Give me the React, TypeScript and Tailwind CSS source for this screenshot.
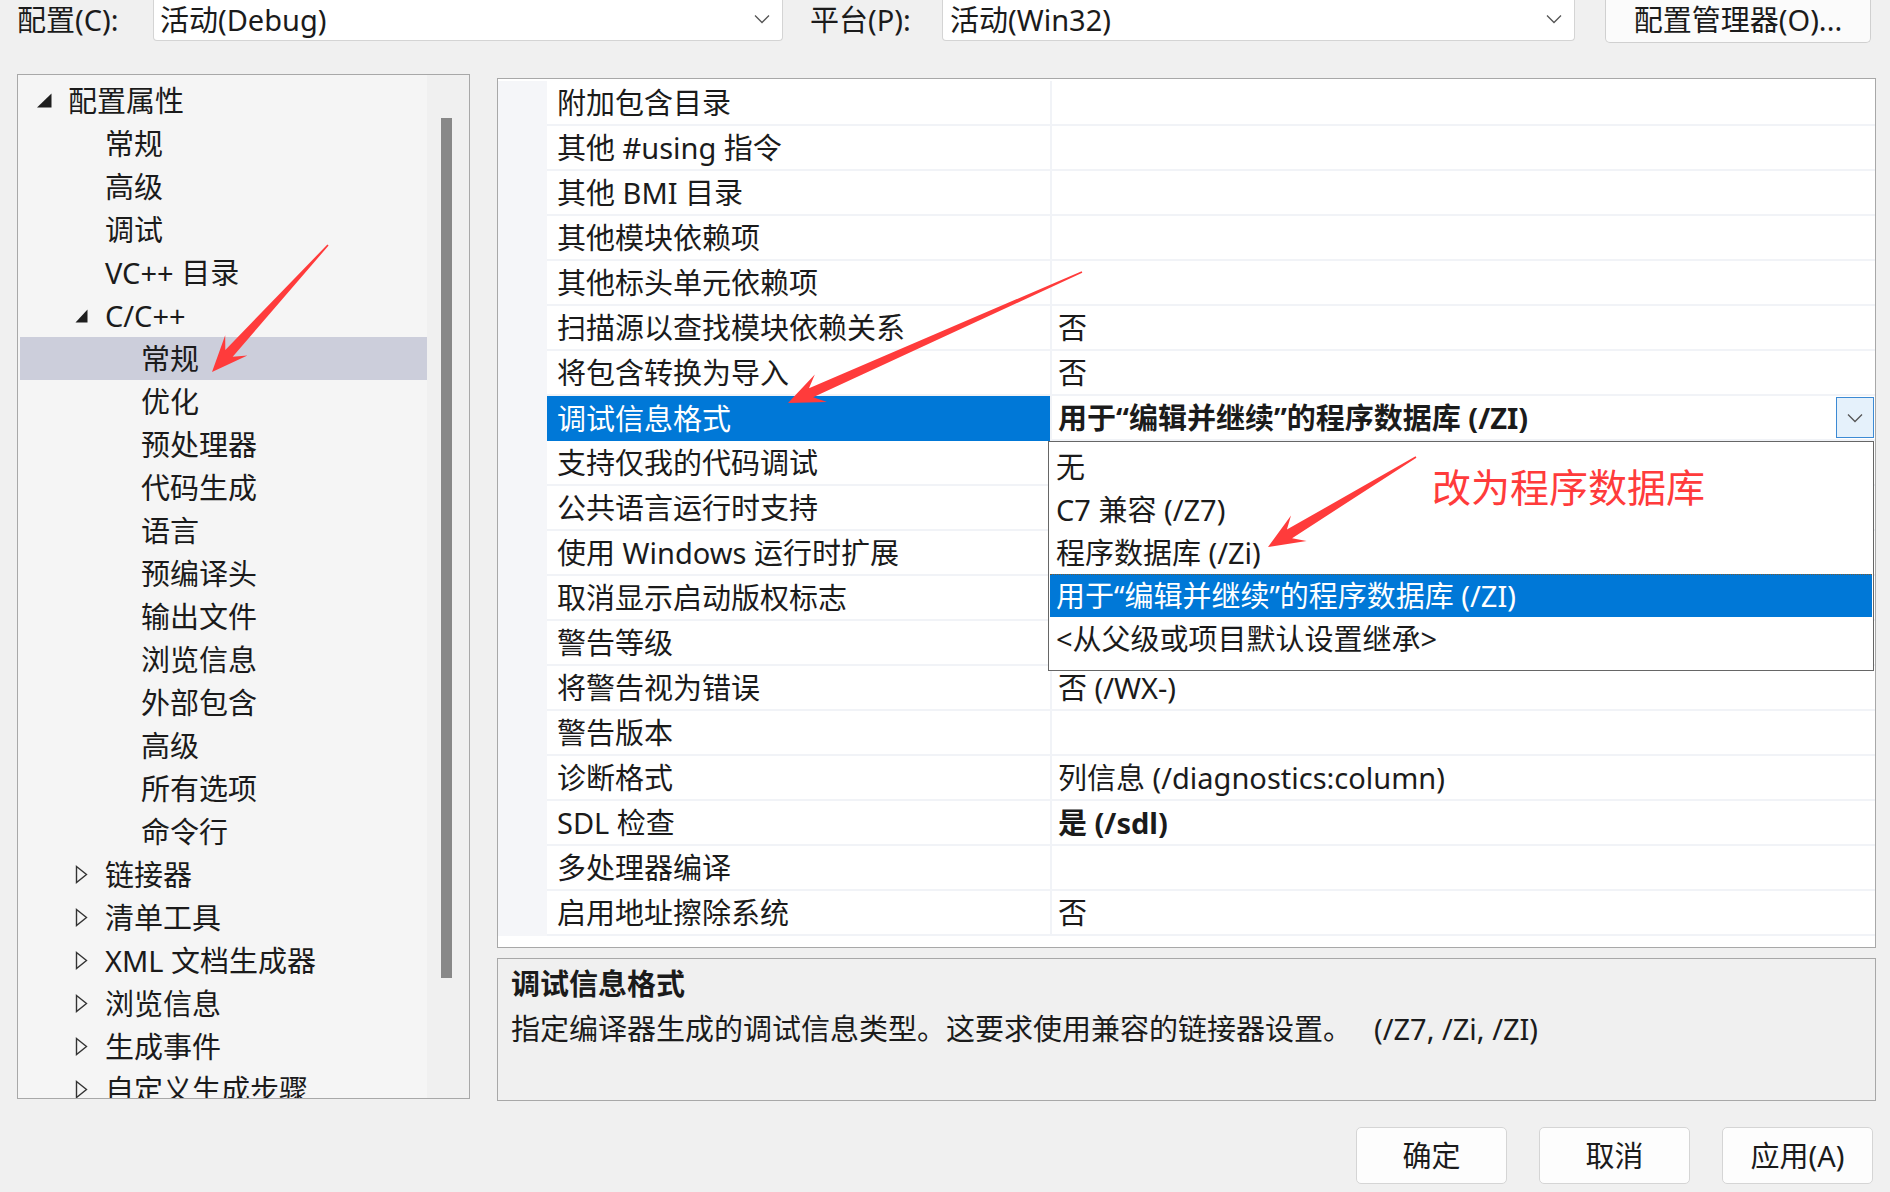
import React from "react";

type TreeItem = {
  label: string;
  level: number;
  toggle?: "open" | "closed";
  selected?: boolean;
};

const treeItems: TreeItem[] = [
  { label: "配置属性", level: 0, toggle: "open" },
  { label: "常规", level: 1 },
  { label: "高级", level: 1 },
  { label: "调试", level: 1 },
  { label: "VC++ 目录", level: 1 },
  { label: "C/C++", level: 1, toggle: "open" },
  { label: "常规", level: 2, selected: true },
  { label: "优化", level: 2 },
  { label: "预处理器", level: 2 },
  { label: "代码生成", level: 2 },
  { label: "语言", level: 2 },
  { label: "预编译头", level: 2 },
  { label: "输出文件", level: 2 },
  { label: "浏览信息", level: 2 },
  { label: "外部包含", level: 2 },
  { label: "高级", level: 2 },
  { label: "所有选项", level: 2 },
  { label: "命令行", level: 2 },
  { label: "链接器", level: 1, toggle: "closed" },
  { label: "清单工具", level: 1, toggle: "closed" },
  { label: "XML 文档生成器", level: 1, toggle: "closed" },
  { label: "浏览信息", level: 1, toggle: "closed" },
  { label: "生成事件", level: 1, toggle: "closed" },
  { label: "自定义生成步骤", level: 1, toggle: "closed" },
];

type PropRow = { name: string; value: string; selected?: boolean; bold?: boolean };

const propRows: PropRow[] = [
  { name: "附加包含目录", value: "" },
  { name: "其他 #using 指令", value: "" },
  { name: "其他 BMI 目录", value: "" },
  { name: "其他模块依赖项", value: "" },
  { name: "其他标头单元依赖项", value: "" },
  { name: "扫描源以查找模块依赖关系", value: "否" },
  { name: "将包含转换为导入", value: "否" },
  { name: "调试信息格式", value: "用于“编辑并继续”的程序数据库 (/ZI)", selected: true, bold: true },
  { name: "支持仅我的代码调试", value: "" },
  { name: "公共语言运行时支持", value: "" },
  { name: "使用 Windows 运行时扩展", value: "" },
  { name: "取消显示启动版权标志", value: "" },
  { name: "警告等级", value: "" },
  { name: "将警告视为错误", value: "否 (/WX-)" },
  { name: "警告版本", value: "" },
  { name: "诊断格式", value: "列信息 (/diagnostics:column)" },
  { name: "SDL 检查", value: "是 (/sdl)", bold: true },
  { name: "多处理器编译", value: "" },
  { name: "启用地址擦除系统", value: "否" },
];

const options = [
  "无",
  "C7 兼容 (/Z7)",
  "程序数据库 (/Zi)",
  "用于“编辑并继续”的程序数据库 (/ZI)",
  "<从父级或项目默认设置继承>",
];

// 箭头多边形：尾部细、头部带倒钩
const arrowPoints = (tx: number, ty: number, px: number, py: number) => {
  const dx = px - tx;
  const dy = py - ty;
  const len = Math.hypot(dx, dy);
  const ux = dx / len;
  const uy = dy / len;
  const nx = -uy;
  const ny = ux;
  const hl = 36;
  const hw = 15;
  const sw = 5;
  const bx = px - ux * hl;
  const by = py - uy * hl;
  const kx = px - ux * hl * 0.7;
  const ky = py - uy * hl * 0.7;
  const pts = [
    [tx + nx * 0.8, ty + ny * 0.8],
    [kx + nx * sw, ky + ny * sw],
    [bx + nx * hw, by + ny * hw],
    [px, py],
    [bx - nx * hw, by - ny * hw],
    [kx - nx * sw, ky - ny * sw],
    [tx - nx * 0.8, ty - ny * 0.8],
  ];
  return pts.map((p) => p.map((v) => v.toFixed(1)).join(",")).join(" ");
};

const Chevron = ({ className }: { className?: string }) => (
  <svg width="16" height="10" viewBox="0 0 16 10" className={className}>
    <path d="M1 1.5 L8 8.5 L15 1.5" fill="none" stroke="#555" strokeWidth="1.3" />
  </svg>
);

const Toggle = ({ kind, big }: { kind: "open" | "closed"; big?: boolean }) =>
  kind === "open" ? (
    big ? (
      <svg width="16" height="15" viewBox="0 0 16 15">
        <polygon points="15.5,0.5 15.5,14.5 1,14.5" fill="#1e1e1e" />
      </svg>
    ) : (
      <svg width="13" height="14" viewBox="0 0 13 14">
        <polygon points="12.5,0.5 12.5,13.5 0.5,13.5" fill="#1e1e1e" />
      </svg>
    )
  ) : (
    <svg width="13" height="19" viewBox="0 0 13 19">
      <polygon points="1.5,1.5 11.5,9.5 1.5,17.5" fill="none" stroke="#333" strokeWidth="1.4" />
    </svg>
  );

const indent: Record<number, string> = {
  0: "pl-[16px]",
  1: "pl-[55px]",
  2: "pl-[121px]",
};

const slot: Record<number, string> = {
  0: "w-[32px]",
  1: "w-[30px]",
  2: "w-0",
};

const App: React.FC = () => {
  return (
    <div className="relative w-[1890px] h-[1192px] overflow-hidden bg-[#f0f0f0] pl-[17px] text-[29px] text-[#1b1b1b] font-['Noto_Sans','Noto_Sans_CJK_SC',sans-serif]">
      {/* 顶部：配置 / 平台 */}
      <div className="flex items-start h-[43px] leading-[40px]">
        <div className="w-[136px] h-[40px]">配置(C):</div>
        <div className="w-[630px] h-[41px] bg-white border-x border-b border-[#d4d4d4] rounded-b-[4px] flex items-start pl-[6px] pr-[12px]">
          <span>活动(Debug)</span>
          <Chevron className="ml-auto mt-[14px]" />
        </div>
        <div className="ml-[27px] w-[132px] h-[40px]">平台(P):</div>
        <div className="w-[633px] h-[41px] bg-white border-x border-b border-[#d4d4d4] rounded-b-[4px] flex items-start pl-[7px] pr-[12px]">
          <span>活动(Win32)</span>
          <Chevron className="ml-auto mt-[14px]" />
        </div>
        <div className="ml-[30px] w-[266px] h-[43px] bg-[#fbfbfb] border-x border-b border-[#d0d0d0] rounded-b-[5px] text-center">
          配置管理器(O)...
        </div>
      </div>

      {/* 主体 */}
      <div className="flex mt-[31px]">
        {/* 左侧树 */}
        <div className="w-[453px] h-[1025px] border border-[#a8a8a8] flex overflow-hidden">
          <div className="w-[409px] bg-[#f5f5f5] pt-[4px] pl-[2px]">
            {treeItems.map((item, i) => (
              <div
                key={i}
                className={`h-[43px] flex items-center ${indent[item.level]} ${item.selected ? "bg-[#cccedb]" : ""}`}
              >
                <div className={`flex items-center shrink-0 ${slot[item.level]}`}>
                  {item.toggle && <Toggle kind={item.toggle} big={item.level === 0} />}
                </div>
                <span className="whitespace-nowrap">{item.label}</span>
              </div>
            ))}
          </div>
          <div className="flex-1 bg-[#f0f0f0] pl-[14px] pt-[43px]">
            <div className="w-[11px] h-[860px] bg-[#888888]" />
          </div>
        </div>

        {/* 右侧属性 */}
        <div className="ml-[27px] w-[1379px] flex flex-col">
          <div className="mt-[4px] h-[870px] border border-[#a8a8a8] bg-white pt-[2px]">
            {propRows.map((row, i) => (
              <div key={i} className="h-[45px] flex">
                <div className="w-[49px] bg-[#f5f6f9] shrink-0" />
                <div
                  className={`w-[503px] shrink-0 flex items-center pl-[10px] whitespace-nowrap ${
                    row.selected ? "bg-[#0078d7] text-white" : "border-b-2 border-[#f1f3f7]"
                  }`}
                >
                  {row.name}
                </div>
                <div className="flex-1 flex items-center border-l-2 border-[#f1f3f7] border-b-2 pl-[6px] whitespace-nowrap">
                  <span className={row.bold ? "font-bold" : ""}>{row.value}</span>
                  {row.selected && (
                    <div className="ml-auto mr-[1px] w-[38px] h-[41px] bg-[#e5f1fb] border border-[#3c8ad4] flex items-center justify-center">
                      <Chevron />
                    </div>
                  )}
                </div>
              </div>
            ))}
          </div>

          {/* 描述 */}
          <div className="mt-[10px] h-[143px] border border-[#a8a8a8] pl-[13px] pt-[10px] leading-[30px]">
            <div className="font-bold">调试信息格式</div>
            <div className="mt-[15px] whitespace-nowrap">
              指定编译器生成的调试信息类型。这要求使用兼容的链接器设置。
              <span className="ml-[22px]">(/Z7, /Zi, /ZI)</span>
            </div>
          </div>
        </div>
      </div>

      {/* 底部按钮 */}
      <div className="flex justify-end gap-[32px] mt-[26px] pr-[17px]">
        {["确定", "取消", "应用(A)"].map((b) => (
          <div
            key={b}
            className="w-[151px] h-[57px] bg-[#fdfdfd] border border-[#d5d5d5] rounded-[5px] flex items-center justify-center"
          >
            {b}
          </div>
        ))}
      </div>

      {/* 下拉列表 */}
      <div className="absolute left-[1048px] top-[441px] w-[826px] h-[230px] bg-white border border-[#666] pt-[3px] px-[1px]">
        {options.map((o, i) => (
          <div
            key={o}
            className={`h-[43px] flex items-center pl-[6px] whitespace-nowrap ${
              i === 3 ? "bg-[#0078d7] text-white border-t border-dotted border-[#7a5a30]" : ""
            }`}
          >
            {o}
          </div>
        ))}
      </div>

      {/* 标注文字 */}
      <div className="absolute left-[1432px] top-[463px] text-[39px] leading-[48px] text-[#ff3b3b]">
        改为程序数据库
      </div>

      {/* 红色箭头 */}
      <svg className="absolute inset-0 pointer-events-none" width="1890" height="1192" viewBox="0 0 1890 1192">
        <polygon points={arrowPoints(328, 245, 212, 372)} fill="#ff3b3b" />
        <polygon points={arrowPoints(1082, 272, 788, 403)} fill="#ff3b3b" />
        <polygon points={arrowPoints(1416, 457, 1268, 547)} fill="#ff3b3b" />
      </svg>
    </div>
  );
};

export default App;
